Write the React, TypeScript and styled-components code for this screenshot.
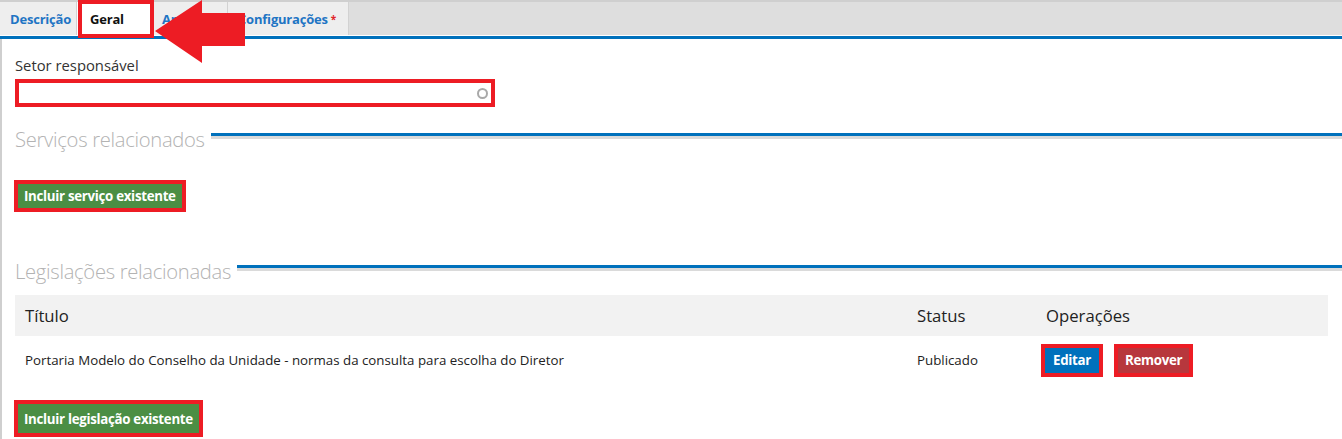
import React from "react";
import styled, { createGlobalStyle } from "styled-components";

const Global = createGlobalStyle`
  html, body { margin: 0; padding: 0; background: #fff; }
  body { font-family: "Open Sans", "Noto Sans", sans-serif; color: #222; }
  * { box-sizing: border-box; }
`;

const Page = styled.div`
  position: relative;
  width: 1342px;
  height: 439px;
  overflow: hidden;
`;

const TabBar = styled.div`
  display: flex;
  height: 36px;
  background: #dedede;
  border-top: 2px solid #cfcfcf;
  border-bottom: 1px solid #fff;
`;

const Tab = styled.div<{ $active?: boolean; $w: number }>`
  position: relative;
  width: ${(p) => p.$w}px;
  display: flex;
  align-items: center;
  padding-left: ${(p) => (p.$active ? 13 : 10)}px;
  background: ${(p) => (p.$active ? "#fff" : "#eeeeee")};
  border-right: 1px solid #d2d2d2;
  font-size: 13px;
  font-weight: 700;
  letter-spacing: -0.2px;
  color: ${(p) => (p.$active ? "#111" : "#1f75c4")};
`;

const Star = styled.span`
  color: #e0242a;
  font-size: 10px;
  margin-left: 3px;
  align-self: flex-start;
  margin-top: 10px;
`;

const BlueRule = styled.div`
  height: 3px;
  background: #0071bc;
`;

const Content = styled.div`
  border-left: 2px solid #cfcfcf;
  padding: 16px 14px 0 13px;
  height: 400px;
`;

const Label = styled.div`
  font-size: 14.8px;
  color: #333;
  margin-bottom: 4px;
`;

const Annot = styled.div`
  border: 4px solid #ed1c24;
`;

const SelectBox = styled(Annot)`
  width: 480px;
  height: 28px;
  display: flex;
  align-items: center;
  justify-content: flex-end;
  padding-right: 3px;
`;

const Ring = styled.span`
  width: 11px;
  height: 11px;
  border-radius: 50%;
  border: 2px solid #a9a9a9;
`;

const SectionHead = styled.div<{ $top: number }>`
  display: flex;
  align-items: flex-start;
  margin-top: ${(p) => p.$top}px;
  gap: 6px;
`;

const SectionTitle = styled.div`
  font-size: 20.2px;
  font-weight: 300;
  color: #b3b3b3;
  line-height: 26px;
  letter-spacing: -0.3px;
`;

const SectionLine = styled.div`
  flex: 1;
  margin-top: 7px;
  margin-right: -14px;
  height: 3px;
  background: #0071bc;
  box-shadow: 0 3px 0 #dadada;
`;

const ButtonFrame = styled(Annot)<{ $top: number; $color: string }>`
  display: inline-flex;
  margin-top: ${(p) => p.$top}px;
  margin-left: -1px;
  background: ${(p) => p.$color};
`;

const Btn = styled.button<{ $color: string; $h: number; $px: number }>`
  border: none;
  margin: 0;
  background: ${(p) => p.$color};
  color: #fff;
  font-family: "Open Sans", sans-serif;
  font-weight: 700;
  font-size: 13.3px;
  letter-spacing: -0.3px;
  height: ${(p) => p.$h}px;
  padding: 0 ${(p) => p.$px}px;
  cursor: pointer;
`;

const Table = styled.div`
  margin-top: 11px;
  width: 1313px;
`;

const Row = styled.div<{ $head?: boolean }>`
  display: grid;
  grid-template-columns: 892px 129px 1fr;
  align-items: center;
  height: ${(p) => (p.$head ? 41 : 48)}px;
  background: ${(p) => (p.$head ? "#f2f2f2" : "transparent")};
  padding-left: 10px;
  font-size: ${(p) => (p.$head ? "16.7px" : "13.3px")};
  color: #222;
`;

const Ops = styled.div`
  display: flex;
  gap: 12px;
  margin-left: -4px;
`;

const Arrow = styled.svg`
  position: absolute;
  left: 155px;
  top: 0;
`;

const GeralBox = styled.div`
  position: absolute;
  left: 78px;
  top: 0;
  width: 76px;
  height: 38px;
  border: 4px solid #ed1c24;
`;

function Annotation() {
  return (
    <>
      <GeralBox />
      <Arrow width="92" height="64" viewBox="0 0 92 64">
        <polygon points="0,31 47,0 47,13 90,13 90,46 47,46 47,63" fill="#ed1c24" />
      </Arrow>
    </>
  );
}

export default function App() {
  return (
    <Page>
      <Global />
      <TabBar>
        <Tab $w={77}>Descrição</Tab>
        <Tab $active $w={75}>Geral</Tab>
        <Tab $w={76}>Anexos</Tab>
        <Tab $w={121}>
          Configurações<Star>*</Star>
        </Tab>
      </TabBar>
      <BlueRule />
      <Content>
        <Label>Setor responsável</Label>
        <SelectBox>
          <Ring />
        </SelectBox>
        <SectionHead $top={19}>
          <SectionTitle>Serviços relacionados</SectionTitle>
          <SectionLine />
        </SectionHead>
        <div>
          <ButtonFrame $top={28} $color="#4b8e44">
            <Btn $color="#4b8e44" $h={24} $px={6}>
              Incluir serviço existente
            </Btn>
          </ButtonFrame>
        </div>
        <SectionHead $top={46}>
          <SectionTitle>Legislações relacionadas</SectionTitle>
          <SectionLine />
        </SectionHead>
        <Table>
          <Row $head>
            <div>Título</div>
            <div>Status</div>
            <div>Operações</div>
          </Row>
          <Row>
            <div>Portaria Modelo do Conselho da Unidade - normas da consulta para escolha do Diretor</div>
            <div>Publicado</div>
            <Ops>
              <ButtonFrame $top={0} $color="#0071bc">
                <Btn $color="#0071bc" $h={25} $px={8}>
                  Editar
                </Btn>
              </ButtonFrame>
              <ButtonFrame $top={0} $color="#b7373d">
                <Btn $color="#b7373d" $h={25} $px={7}>
                  Remover
                </Btn>
              </ButtonFrame>
            </Ops>
          </Row>
        </Table>
        <div>
          <ButtonFrame $top={16} $color="#4b8e44">
            <Btn $color="#4b8e44" $h={29} $px={6}>
              Incluir legislação existente
            </Btn>
          </ButtonFrame>
        </div>
      </Content>
      <Annotation />
    </Page>
  );
}
